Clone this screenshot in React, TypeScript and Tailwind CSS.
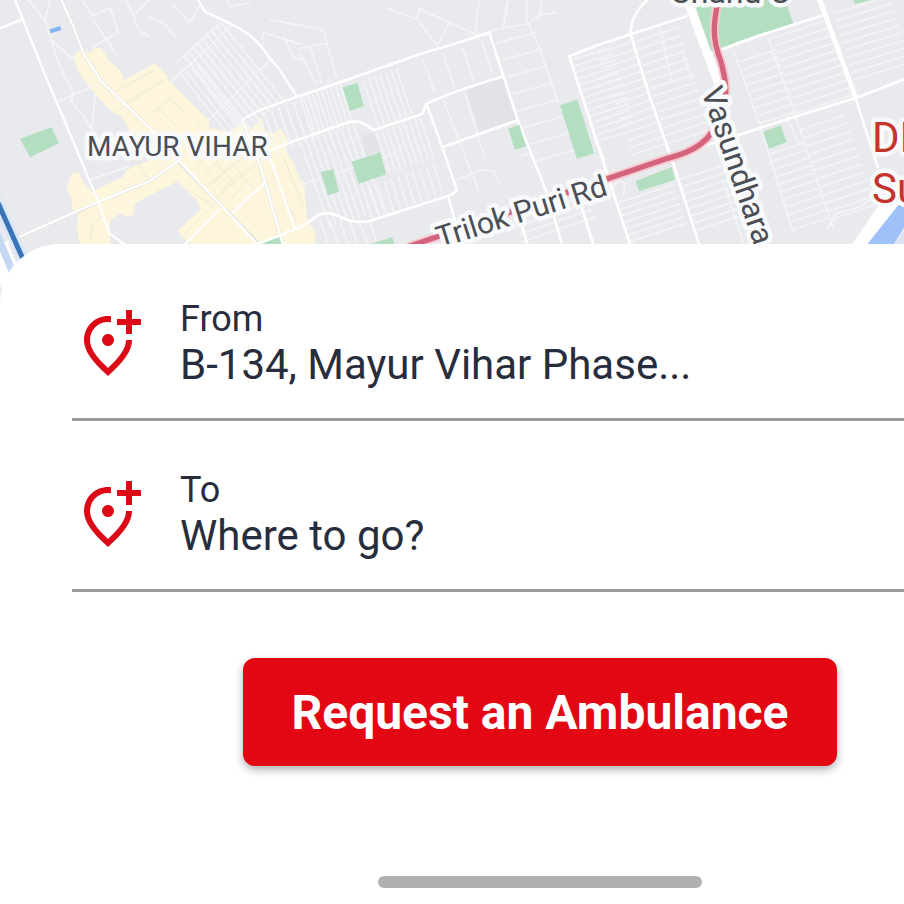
import { useState } from "react";

// Builds a run of parallel streets: `count` segments of vector (dx, dy)
// spread evenly between (x1, y1) and (x2, y2).
const streets = (x1: number, y1: number, x2: number, y2: number, dx: number, dy: number, count: number) =>
  Array.from({ length: count }, (_, i) => {
    const t = count > 1 ? i / (count - 1) : 0;
    return `M${x1 + (x2 - x1) * t} ${y1 + (y2 - y1) * t}l${dx} ${dy}`;
  }).join("");

const WestTile = () => (
  <g>
    <path
      fill="#fdf6dc"
      d="M222 172L230 155 255 150 270 160 285 143 305 145 330 185 360 210 372 240 465 190 500 225 510 245 625 360 630 385 690 395 730 360 755 390 785 348 795 395 820 400 845 388 862 415 860 455 885 500 900 540 912 545 920 650 945 700 945 735 575 735 540 705 535 690 600 630 590 600 530 545 440 590 405 610 400 645 380 650 360 640 330 660 330 735 240 735 230 680 235 640 215 625 215 595 200 570 205 550 215 520 235 515 250 545 275 575 370 530 375 515 400 500 450 480 455 455 400 410 365 350 335 335 270 265 235 215z"
    />
    <g fill="#b3dfc0">
      <path d="M60 416l95-34 21 48-86 42z" />
      <path d="M785 732l52-24 8 24z" />
    </g>
    <g fill="none" stroke="#ede8d6" strokeWidth="3">
      <path d="M345 275l120-65M380 305l130-75M440 352l70-55 45 40M470 320l60 60M590 380l40-45M400 470l50 75M330 345l90-55M560 570l80 45-90 90M600 550l50 60M690 480l75 90M620 560l120-95M640 600l130-110M850 470l60 150M830 540l60 130M650 490l50 60M235 640l60-30M270 720l10-50 40-30" />
      <path d={streets(590, 500, 720, 620, 45, -50, 6)} />
    </g>
    <g fill="none" stroke="#f4f5f7" strokeWidth="5">
      <path d="M85 0l50 62 15-62M135 62l20 60 65 55M150 110l30 90 38 75-3 30 45 55 15 30 10-110M175 305l100-45M268 540l120-40" />
      <path d="M245 0l35 48 50-25 25 75-80 45M280 60l70 105M375 0l25 45 48-45M400 45l15 45 35 20M448 50l45 20 38 48M520 18l50 50 22-42 15-10" />
      <path d="M530 188l130-120M508 250l195-180M625 360l185-180M785 120l5-22 115 35M810 58l95 20M680 0l10 20 60-12M850 110l30 60 25 10" />
      <path d={streets(550, 165, 665, 70, 185, 230, 9)} />
      <path d={streets(545, 225, 590, 195, 140, 180, 4)} />
      <path d={streets(770, 345, 900, 295, 45, 130, 7)} />
    </g>
    <g fill="none" stroke="#e0e0dd" strokeWidth="10">
      <path d="M185 0l35 80 30 80 55 85 145 140M535 485l240 245M0 735l60-25 235-105 150-60 90-62M725 355l55 140 68 235" />
    </g>
    <g fill="none" stroke="#fff" strokeWidth="7">
      <path d="M45 0l80 200 105 250 65 155 33 95 55 40M0 85l65-26M185 0l35 80 30 80 55 85 145 140 90 100 235 250" />
      <path d="M0 735l60-25 235-105 150-60 90-62M555 732l105-105M695 640l100-92M770 732l70-25 60-25" />
      <path d="M595 0l20 35 80 38c100 50 95 90 140 130l55 85M725 360l50-28 125-45M725 355l55 140 68 235M795 458l105-42M805 458l80 230" />
    </g>
    <g fill="none">
      <path d="M-10 740l75 175" stroke="#fff" strokeWidth="70" />
      <path d="M-10 700l65 160" stroke="#c6d7f4" strokeWidth="22" />
      <path d="M-12 595l100 225" stroke="#dbe6f6" strokeWidth="34" />
      <path d="M-12 595l100 225" stroke="#3973b8" strokeWidth="15" />
      <path d="M150 94l32-10" stroke="#83b4f1" strokeWidth="12" />
    </g>
  </g>
);

const CentreTile = () => (
  <g transform="translate(900 0)">
    <path fill="#e1e3e6" d="M500 270l110-38 44 125-115 42zM185 408l35-10 22 55-45 15z" />
    <g fill="none" stroke="#f3f4f6" strokeWidth="5">
      <path d="M255 22l95 35 8-30 167 75 12-100M350 57l62 80 35-68M525 105l85-20 15-85M610 85l75-15 35-25 50-8M685 70l35 80 55 160M720 45l5-45M0 75l70 15 10 40-80 15M80 130l30 105M0 160l50 95M30 140l35 110" />
      <path d={streets(590, 130, 700, 485, 120, -34, 8)} />
      <path d={streets(370, 180, 545, 122, 34, 100, 4)} />
      <path d={streets(10, 290, 120, 252, 38, 120, 9)} />
      <path d={streets(190, 240, 290, 205, 46, 140, 7)} />
      <path d={streets(0, 425, 160, 375, 90, 255, 10)} />
      <path d={streets(230, 400, 360, 350, 40, 120, 9)} />
      <path d={streets(190, 570, 400, 490, 28, 90, 11)} />
      <path d={streets(60, 660, 210, 670, 25, 70, 6)} />
      <path d="M430 300l105 270M495 280l60 195M470 540l80-32 30 5 22 42M665 468l40-16M0 555l290-95M620 10l-10 75M680 0v70" />
      <path d={streets(640, 660, 665, 725, 220, -75, 4)} />
      <path d={streets(815, 180, 890, 425, 120, -38, 14)} />
    </g>
    <g fill="none" stroke="#fff" strokeWidth="8">
      <path d="M0 288l130-45 240-84 95-28 103-33 85 262 90 225 42 145M900 133l-92 36 85 265 20 50" />
      <path d="M0 418l130-47c45-15 55-5 92 19l145-48 12-30c60-30 160-62 235-84M379 312l48 130 44 130-15 12-250 80c-90 10-90-40-150-20L0 685M427 442l228-82M445 592l20 70 15 80M660 660l25 80M835 590l45 145" />
    </g>
    <g fill="#b3dfc0">
      <path d="M128 262l44-13 20 69-42 15zM155 485l86-28 17 66-82 28zM62 516l38-8 17 68-33 10zM210 732l66-20 8 20zM625 386l33-12 20 65-33 11zM780 316l52-17 51 161-52 16z" />
    </g>
  </g>
);

const EastTile = () => (
  <g transform="translate(1800 0)">
    <g fill="#b3dfc0">
      <path d="M280 0h275l25 70-170 55-75 38zM760 0h55l-50 12z" />
      <path d="M107 543l108-42 10 38-108 35zM486 396l56-20 18 50-52 20z" />
    </g>
    <g fill="none" stroke="#f3f4f6" strokeWidth="5">
      <path d={streets(-5, 160, 95, 465, 105, -35, 15)} />
      <path d={streets(105, 125, 205, 430, 130, -43, 14)} />
      <path d={streets(420, 185, 480, 370, 110, -36, 9)} />
      <path d={streets(515, 115, 590, 340, 170, -56, 11)} />
      <path d={streets(700, 40, 760, 240, 170, -52, 10)} />
      <path d={streets(50, 610, 90, 725, 170, -56, 7)} />
      <path d={streets(235, 540, 290, 690, 140, -46, 8)} />
      <path d={streets(500, 465, 575, 690, 110, -36, 11)} />
      <path d={streets(600, 390, 690, 660, 135, -45, 12)} />
      <path d="M400 150l85 240 95 310M505 115l90 260 105 310M670 50l95 240M180 80l35 165M245 150l30 90M370 540l60 190M560 350l35 80M40 560l15-20 20 10-5 35M680 690l30-50 60-15 65-40" />
    </g>
    <g fill="none" stroke="#fff" strokeWidth="8">
      <path d="M0 133l92-30 170-55M92 103c0-50 25-80 50-103M92 103l55 180 75 215 75 235M325 163l170-62 185-58M200 475l370-120 200-62 142-55M655 0l60 150 50 140 70 215M0 455l90 278" />
    </g>
    <g fill="none" stroke="#fff">
      <path d="M262 0l120 320" strokeWidth="26" />
      <path d="M660 0l108 295" strokeWidth="14" />
    </g>
    <path fill="#fff" d="M755 735l85-125h90l-110 125z" />
    <path fill="#9fc1fa" d="M800 735l95-120h30v45l-45 75z" />
    <path fill="#d9e4f6" d="M885 735l30-45v45z" />
  </g>
);

const halo = {
  stroke: "#f8f9fa",
  strokeLinejoin: "round" as const,
  paintOrder: "stroke",
};

const Map = () => (
  <svg
    className="block h-[304px] w-full bg-[#e8eaed]"
    viewBox="0 0 904 304"
    preserveAspectRatio="xMinYMin slice"
    role="img"
    aria-label="Map"
  >
    <g transform="scale(.33333)">
      <WestTile />
      <CentreTile />
      <EastTile />
      <g fill="none" strokeLinecap="round" strokeLinejoin="round">
        <path d="M2155 0c-15 70-20 115 8 185 12 50 25 90 0 160-30 80-80 110-160 130L1230 738" stroke="#f7c9d1" strokeWidth="27" />
        <path d="M2155 0c-15 70-20 115 8 185 12 50 25 90 0 160-30 80-80 110-160 130L1230 738" stroke="#d3647c" strokeWidth="16" />
      </g>
    </g>
    <g className="font-[Roboto,sans-serif]" fontSize="30" fill="#4b4e54" strokeWidth="9">
      <text x="87" y="156" fontSize="28" {...halo}>MAYUR VIHAR</text>
      <text transform="translate(440 248) rotate(-17.5)" {...halo}>Trilok Puri Rd</text>
      <text transform="translate(701 91) rotate(71)" fontSize="31" {...halo}>Vasundhara</text>
      <text x="670" y="3" fontSize="32" {...halo}>Chand C</text>
      <g fontSize="42" fill="#c5332d">
        <text x="872" y="152" {...halo}>DI</text>
        <text x="872" y="203" {...halo}>Su</text>
      </g>
    </g>
  </svg>
);

const AddLocationIcon = () => (
  <svg className="mt-[9px] size-[72px] shrink-0" viewBox="0 0 24 24" fill="#dc0a17" aria-hidden="true">
    <path d="M20 1v3h3v2h-3v3h-2V6h-3V4h3V1h2zm-8 12c1.1 0 2-.9 2-2s-.9-2-2-2-2 .9-2 2 .9 2 2 2zm1-9.94v2.02A6.53 6.53 0 0 0 12 5c-3.35 0-6 2.57-6 6.2 0 2.34 1.95 5.44 6 9.14 4.05-3.7 6-6.79 6-9.14V11h2v.2c0 3.32-2.67 7.25-8 11.8-5.33-4.55-8-8.48-8-11.8C4 6.22 7.8 3 12 3c.34 0 .67.02 1 .06z" />
  </svg>
);

interface LocationFieldProps {
  id: string;
  label: string;
  value: string;
  placeholder?: string;
  onChange: (value: string) => void;
}

const LocationField = ({ id, label, value, placeholder, onChange }: LocationFieldProps) => (
  <div className="flex items-start gap-9 border-b-3 border-[#9b9b9b] pt-12 pb-7">
    <AddLocationIcon />
    <div className="flex min-w-0 flex-1 flex-col">
      <label htmlFor={id} className="text-[36px] leading-[42px]">
        {label}
      </label>
      <input
        id={id}
        type="text"
        value={value}
        placeholder={placeholder}
        onChange={(e) => onChange(e.target.value)}
        className="h-[50px] w-full bg-transparent text-[42px] leading-[50px] outline-none placeholder:text-[#272d3d]"
      />
    </div>
  </div>
);

export default function App() {
  const [from, setFrom] = useState("B-134, Mayur Vihar Phase...");
  const [to, setTo] = useState("");

  return (
    <main className="flex min-h-screen flex-col overflow-hidden bg-white font-[Roboto,sans-serif] text-[#272d3d]">
      <Map />
      <form
        className="relative -mt-[60px] flex flex-1 flex-col rounded-tl-[60px] bg-white pt-1.5"
        onSubmit={(e) => e.preventDefault()}
      >
        <div className="pl-[72px]">
          <LocationField id="from" label="From" value={from} onChange={setFrom} />
          <LocationField id="to" label="To" value={to} placeholder="Where to go?" onChange={setTo} />
        </div>
        <div className="flex flex-1 flex-col items-center justify-between pt-[66px] pb-4 pl-[176px]">
          <button
            type="submit"
            className="rounded-xl bg-[#e30613] px-12 pt-[25px] pb-[23px] text-5xl leading-[60px] font-bold text-white shadow-[0_4px_8px_rgba(0,0,0,0.3)]"
          >
            Request an Ambulance
          </button>
          <div className="h-3 w-[324px] rounded-full bg-[#b0b0b0]" />
        </div>
      </form>
    </main>
  );
}
